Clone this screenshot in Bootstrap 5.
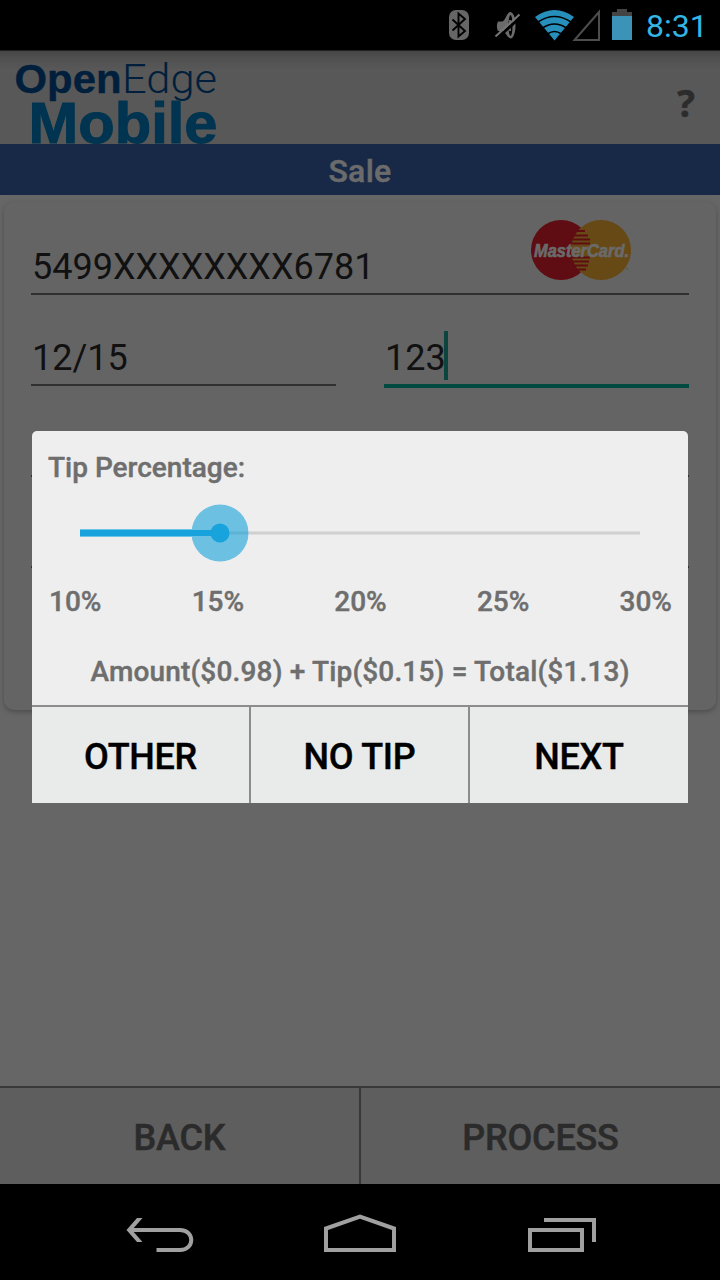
<!DOCTYPE html>
<html lang="en">
<head>
<meta charset="utf-8">
<meta name="viewport" content="width=device-width, initial-scale=1">
<title>OpenEdge Mobile – Sale</title>
<link href="https://cdn.jsdelivr.net/npm/bootstrap@5.3.0/dist/css/bootstrap.min.css" rel="stylesheet">
<style>
body{font-family:Roboto,"Liberation Sans",sans-serif;background:#000;width:720px;height:1280px;overflow:hidden}
svg{display:block}
.status{height:50px;background:#000}
.clock{font-size:32px;line-height:50px;padding:1px 0 0 1px;color:#33b5e5;width:59px;letter-spacing:0;white-space:nowrap}
.app{height:1134px;background:#666}
.brand-bar{height:94px;background:linear-gradient(#222 0,#222 1px,#454545 1px,#505050 8px,#585858 20px)}
.help{font:700 37px/50px "Open Sans",sans-serif;color:#2c2c2c;padding:12px 25px 0 0;-webkit-text-stroke:.5px}
.title-bar{height:51px;line-height:51px;padding-top:2px;background:#172947;color:#6b6b6b;font-size:32px;font-weight:500;-webkit-text-stroke:.5px;letter-spacing:.3px}
.panel{margin:7px 4px 0;height:508px;padding:0 27px;background:#646464;border-radius:10px;box-shadow:0 2px 5px rgba(0,0,0,.25)}
.field{height:91px;border-bottom:2px solid #303030;font-size:36px;line-height:36px;color:#111;padding:45px 0 0 1px}
.first{height:93px;padding-top:47px}
.active-field{height:93px;border-bottom:4px solid #004a40;color:#111}
.caret{width:4px;height:49px;margin:-9px 0 0 -2px;background:#0c453e}
.actions{height:98px;border-top:2px solid #383838;background:#5e5e5e}
.act{flex:1 1 0;padding-top:3px;font-size:36px;font-weight:500;color:#2b2b2b;-webkit-text-stroke:.5px;letter-spacing:-.2px}
.act+.act{border-left:2px solid #383838}
.navkeys{height:96px;background:#000}
.dialog-box{left:32px;top:431px;width:656px;height:372px;background:#eee;border-radius:5px 5px 0 0;color:#6e6e6e;font-size:28px;font-weight:500;line-height:36px;-webkit-text-stroke:.4px}
.sum-line{margin-top:34px;letter-spacing:.17px}
.scale-row{margin-top:32px;padding:0 16px 0 17px}
.opts{height:98px;border-top:2px solid #8c8c8c;background:#e9ebea}
.opt{width:217px;padding-top:4px;font-size:36px;color:#000;letter-spacing:-.3px}
.opt+.opt{width:219px;border-left:2px solid #8c8c8c}
.opt:last-child{flex-grow:1}
</style>
</head>
<body>
<header class="status d-flex justify-content-end">
  <svg width="205" height="50" viewBox="440 0 205 50">
    <rect x="449" y="10" width="20" height="30" rx="7" fill="#666"/>
    <path d="M452.500 19.500l12.500 11.500-6.500 5.500v-23l6.500 5.500-12.500 11.500" fill="none" stroke="#000" stroke-width="1.900"/>
    <path d="M498 21.500h4.500c3-1 4.500-9.500 8-9.500 4 1 5 8 5 13.500s-1.500 13-5 13c-3.500-1-5-7-8-7.500h-4.500c-1.500-3-1.500-6.500 0-9.500z" fill="#6b6b6b"/>
    <ellipse cx="510.500" cy="25.500" rx="2" ry="10.500" fill="#000"/>
    <path d="M510 20v11" stroke="#666" stroke-width="2"/>
    <path d="M497 38.500l24-22" stroke="#000" stroke-width="3"/>
    <path d="M495.500 36.500l24-22" stroke="#777" stroke-width="2"/>
    <path d="M554.500 40.500L535 17q19.500-14 39 0z" fill="#278fbb"/>
    <path d="M538 22q16.500-11 33 0M542.500 28q12-8 24 0M547.500 34q7-5 14 0" fill="none" stroke="#000" stroke-width="1.600"/>
    <path d="M599 12v28h-24.500z" fill="none" stroke="#4d4d4d" stroke-width="2"/>
    <path d="M612 12h5V9h10v3h5v4h-20z" fill="#444"/>
    <rect x="612" y="16" width="20" height="24" fill="#3b93b8"/>
  </svg>
  <div class="clock me-3">8:31</div>
</header>

<main class="app d-flex flex-column">
  <div class="brand-bar d-flex justify-content-between align-items-center">
    <svg width="230" height="94" viewBox="0 50 230 94" font-family="Liberation Sans, sans-serif">
      <text x="14.500" y="93.300" font-size="40.500" font-weight="700" fill="#001f3c" stroke="#001f3c" stroke-width=".4" textLength="107" lengthAdjust="spacingAndGlyphs">Open</text>
      <text x="122" y="93.300" font-size="40" font-weight="300" font-family="Roboto, sans-serif" fill="#001f3c" textLength="95" lengthAdjust="spacingAndGlyphs">Edge</text>
      <text x="28.500" y="142.500" font-size="56.500" font-weight="700" fill="#003450" stroke="#003450" textLength="189" lengthAdjust="spacingAndGlyphs">Mobile</text>
    </svg>
    <div class="help">?</div>
  </div>
  <div class="title-bar text-center">Sale</div>

  <section class="panel">
    <div class="field first d-flex justify-content-between">
      <span>5499XXXXXXXX6781</span>
      <svg class="flex-shrink-0" style="margin:-31px 57px 0 0" width="102" height="64" viewBox="530 218 102 64">
        <circle cx="561" cy="250" r="30" fill="#5f0d13"/>
        <circle cx="601" cy="250" r="30" fill="#674916"/>
        <path d="M577 231h8M574 235.500h14M573 239.500h17M572 243.500h18M572 257.500h18M573 261.500h16M575 265.500h13M578 269.500h8" stroke="#5f0d13" stroke-width="2"/>
        <text x="534" y="257" font-family="Liberation Sans, sans-serif" font-size="19" font-weight="700" font-style="italic" fill="#6a6a6a" stroke="#6a6a6a" stroke-width=".7" textLength="95" lengthAdjust="spacingAndGlyphs">MasterCard.</text>
        <path d="M626 268l2 1.500" stroke="#674916"/>
      </svg>
    </div>
    <div class="d-flex gap-5">
      <div class="field w-50">12/15</div>
      <div class="field active-field w-50 d-flex">123<span class="caret"></span></div>
    </div>
    <div class="field" style="margin-top:-2px"></div>
    <div class="field"></div>
  </section>

  <footer class="actions d-flex mt-auto">
    <div class="act d-flex align-items-center justify-content-center">BACK</div>
    <div class="act d-flex align-items-center justify-content-center">PROCESS</div>
  </footer>
</main>

<nav class="navkeys">
  <svg width="720" height="96" viewBox="0 1184 720 96" fill="none" stroke="#a0a0a0" stroke-width="4">
    <path d="M130 1230h50c15 0 15 20 0 20h-23.500"/>
    <path d="M137 1218h5.500l-10.500 12 10.500 12h-5.500l-10.500-12z" fill="#a0a0a0" stroke="none"/>
    <path d="M326 1250v-21.500l34-12 34 12v21.500z"/>
    <path d="M530 1230h52v20h-52zM544 1220h50v22"/>
  </svg>
</nav>

<section class="dialog-box position-absolute d-flex flex-column overflow-hidden">
  <div class="px-3" style="padding-top:19px">Tip Percentage:</div>
  <svg class="overflow-visible flex-shrink-0" width="656" height="66" viewBox="32 486 656 66">
    <rect x="80" y="531" width="560" height="4" fill="#dedede"/>
    <rect x="80" y="532" width="560" height="2" fill="#d0d0d0"/>
    <rect x="80" y="529" width="140" height="8" fill="#6fc5e6"/>
    <circle cx="220" cy="533" r="28.500" fill="#6cc0e2"/>
    <path d="M229 533h19" stroke="#5eb3d5" stroke-width="3"/>
    <path d="M80 533h140" stroke="#18a3dc" stroke-width="6"/>
    <circle cx="220" cy="533" r="9.500" fill="#18a3dc"/>
  </svg>
  <div class="scale-row d-flex justify-content-between">
    <span>10%</span><span>15%</span><span>20%</span><span>25%</span><span>30%</span>
  </div>
  <div class="sum-line text-center">Amount($0.98) + Tip($0.15) = Total($1.13)</div>
  <div class="opts d-flex mt-auto">
    <div class="opt d-flex align-items-center justify-content-center">OTHER</div>
    <div class="opt d-flex align-items-center justify-content-center">NO TIP</div>
    <div class="opt d-flex align-items-center justify-content-center">NEXT</div>
  </div>
</section>
<script src="https://cdn.jsdelivr.net/npm/bootstrap@5.3.0/dist/js/bootstrap.bundle.min.js"></script>
</body>
</html>
